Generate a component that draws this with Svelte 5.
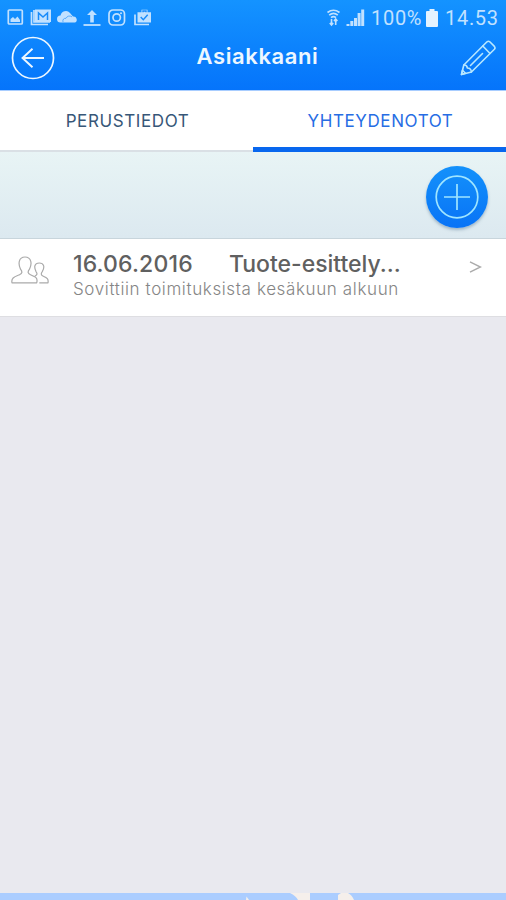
<script>
  const tabs = [
    { label: 'PERUSTIEDOT', active: false },
    { label: 'YHTEYDENOTOT', active: true }
  ];
  const contacts = [
    { date: '16.06.2016', title: 'Tuote-esittely...', note: 'Sovittiin toimituksista kesäkuun alkuun' }
  ];
</script>

<div class="screen">
  <header>
    <div class="status">
      <svg class="notifications" width="152" height="18" viewBox="0 0 152 18" fill="none" stroke="currentColor" stroke-width="1.7">
        <rect x="1.300" y="2" width="14" height="14" rx="1" />
        <path d="M3.500 14V11l2.500-2 2 2 2.500-2.500L13 12v2z" fill="currentColor" stroke="none" />
        <path d="M24.500 4v12.500H41M27 2v12h16" />
        <path d="M28 1.500h16v12.500H28z" fill="currentColor" stroke="none" />
        <path d="M31.500 12V5l4.500 4 4.500-4v7" stroke="#188bfa" stroke-width="1.500" />
        <path d="M53.500 14.500a3.500 3.500 0 0 1 0-7A5.500 5.500 0 0 1 63 5L66 8.500a3.200 3.200 0 0 1 2 6z" fill="currentColor" stroke="none" />
        <path d="M56 14c-.7-2.500 1-4 3-3.700 1-2.300 3.800-3 6-1.500" stroke="#188bfa" stroke-width=".6" />
        <path d="M76.500 17H93.500" stroke-width="1.800" />
        <path d="M85 2l5 5h-3.200v7.500h-3.600V7H80z" fill="currentColor" stroke="none" />
        <rect x="102" y="2" width="15.500" height="15" rx="4" />
        <circle cx="109.700" cy="9.500" r="3.700" />
        <circle cx="114" cy="5.300" r="1" fill="currentColor" stroke="none" />
        <path d="M128 6.500v10h14" />
        <path d="M130.500 4.300h4V1.800h6v2.500H144v10.200h-13.500z" fill="currentColor" stroke="none" />
        <path d="M136 4.300V3h3v1.300M133.700 9l2.600 2.700 4.400-5" stroke="#188bfa" stroke-width="1.400" />
      </svg>
      <div class="system">
        <svg width="40" height="20" viewBox="0 0 40 20" fill="none" stroke="currentColor" stroke-width="1.700">
          <path d="M1.500 4.500q6-4.500 12 0M3.200 7.200q4.300-3.500 8.600 0M5 9.700q2.500-2 5 0" />
          <path d="M5.500 11v6M3.800 15l1.700 2 1.700-2M9.700 17v-6M8 13l1.700-2 1.700 2" stroke-width="1.600" />
          <path d="M20.500 18v-2h3v2zM24.300 18v-5h3v5zM28 18v-8h3v8zM31.600 18V5h3v13zM35.200 18V1.500h3V18z" fill="currentColor" stroke="none" />
        </svg>
        <span class="percent">100%</span>
        <svg class="battery" width="12" height="18" viewBox="0 0 12 18"><path d="M3.500 0h5v2H11q1 0 1 1v14q0 1-1 1H1q-1 0-1-1V3q0-1 1-1h2.500z" fill="currentColor" /></svg>
        <span class="time">14.53</span>
      </div>
    </div>
    <nav>
      <svg width="44" height="44" viewBox="0 0 44 44" fill="none" stroke="#edf7ff" stroke-width="1.700">
        <circle cx="22" cy="22" r="20.500" />
        <path d="M33 22H11.500M21.500 12.800L11.500 22l10 9.200" stroke-width="1.900" />
      </svg>
      <h1>Asiakkaani</h1>
      <svg width="36" height="36" viewBox="0 0 36 36" fill="none" stroke="#b7e7ff" stroke-width="1.600" stroke-linejoin="round" stroke-linecap="round">
        <path d="M1.500 34.500L3.800 25 27 1.800q1.400-1 2.800 0l4.600 4.600q1.200 1.500 0 2.900L11.400 32z" />
        <path d="M3.800 25q3.300-.2 3.500 3 3.800.1 4.100 4M22.800 6l7 7.200M10.500 25.500L22.500 13.500M1.500 34.500l1-4.300 3 3z" />
      </svg>
    </nav>
  </header>

  <div class="tabs">
    {#each tabs as tab}
      <div class="tab" class:active={tab.active}><span>{tab.label}</span></div>
    {/each}
  </div>

  <div class="toolbar">
    <div class="add">
      <svg width="46" height="46" viewBox="0 0 46 46" fill="none" stroke="#9fe5ff" stroke-width="1.700">
        <circle cx="23" cy="23" r="20.800" />
        <path d="M10 23h26M23 10v26" />
      </svg>
    </div>
  </div>

  <main>
    {#each contacts as contact}
      <article>
        <svg class="people" width="38" height="28" viewBox="0 0 38 28" fill="none" stroke="#aaa" stroke-width="1.200" stroke-linejoin="round">
          <path d="M1 26.800C0 22 3 21 8.500 18.700c3-1.200 3-3 1-5.500C7 8 7.500 1 14 1s7.200 7 4.500 12.200c-2 2.500-2 4.300 1 5.500C25 21 27 22 25.700 26.800z" />
          <path d="M28.300 26.800H37c.7-4-1-5-4.700-6.600-2.500-1-2.500-2.700-1-4.600C34 11 33 7 28.300 7c-5 0-5.500 4-3.300 8.600 1.500 2 1.500 3.500-1.200 4.600" />
        </svg>
        <div class="details">
          <div class="headline"><span class="date">{contact.date}</span><span class="title">{contact.title}</span></div>
          <p>{contact.note}</p>
        </div>
        <svg class="chevron" width="13" height="12" viewBox="0 0 13 12" fill="none" stroke="#aaa" stroke-width="1.400"><path d="M1 .8L11.500 6 1 11.200" /></svg>
      </article>
    {/each}
  </main>

  <footer>
    <svg width="506" height="7" viewBox="0 0 506 7" fill="#f5efeb">
      <path d="M246 7l.5-3.500L249 7zM290 0h20v7h-12q-2-4-8-7zM338 7v-5l3-2h7q4 2 6 7z" />
    </svg>
  </footer>
</div>

<style>
  :global(body) { margin: 0; }
  .screen {
    width: 506px;
    height: 900px;
    display: flex;
    flex-direction: column;
    overflow: hidden;
    background: #e9e9ef;
    font-family: Inter, "Liberation Sans", sans-serif;
  }
  svg { display: block; flex: none; }
  header { height: 90px; flex: none; background: linear-gradient(#1493ff, #0574fb); }
  .status {
    height: 36px;
    box-sizing: border-box;
    padding: 8px 8px 0 7px;
    display: flex;
    justify-content: space-between;
    align-items: flex-start;
    color: #c1e1ff;
  }
  .system { display: flex; align-items: flex-start; font: 20px/21px Roboto, sans-serif; }
  .percent { margin-left: 5px; width: 52px; letter-spacing: .7px; white-space: nowrap; }
  .battery { margin-left: 3px; margin-top: 1px; color: #e5f3ff; }
  .time { margin-left: 7px; width: 53px; letter-spacing: .7px; }
  nav { display: flex; justify-content: space-between; padding: 0 10px 0 11px; }
  nav svg:last-child { margin-top: 4px; }
  h1 { margin: 7px 0 0; font-size: 22px; line-height: 26px; font-weight: 600; color: #edf7ff; letter-spacing: .6px; }
  .tabs { display: flex; height: 62px; flex: none; box-sizing: border-box; background: #fff; border-top: 1px solid #a8cdff; }
  .tab {
    width: 50%;
    box-sizing: border-box;
    padding-left: 2px;
    border-bottom: 2px solid #dae0e5;
    text-align: center;
    font-size: 17px;
    line-height: 60px;
    letter-spacing: .6px;
    color: #375778;
  }
  .tab.active { color: #276de4; border-bottom: 5px solid #0867ee; }
  .toolbar {
    height: 87px;
    flex: none;
    box-sizing: border-box;
    padding: 14px 18px 0;
    display: flex;
    justify-content: flex-end;
    background: linear-gradient(#e8f4f5, #dce9f0);
    border-bottom: 1px solid #c8d5dc;
  }
  .add {
    width: 62px;
    height: 62px;
    border-radius: 50%;
    background: linear-gradient(#1491fb, #0873f6);
    display: grid;
    place-items: center;
    box-shadow: 0 2px 3px #63819b80;
  }
  main { flex: 1; }
  article {
    height: 78px;
    box-sizing: border-box;
    background: #fff;
    display: flex;
    align-items: flex-start;
    padding-left: 11px;
    border-bottom: 1px solid #dedee2;
  }
  .people { margin-top: 17px; }
  .details { width: 395px; margin-left: 24px; }
  .headline { display: flex; height: 27px; margin-top: 12px; font-size: 23px; line-height: 27px; font-weight: 500; color: #606060; white-space: nowrap; }
  .date { width: 156px; letter-spacing: .15px; }
  .title { letter-spacing: -.02px; }
  p { margin: 0; font-size: 17px; line-height: 22px; font-weight: 300; color: #858585; letter-spacing: .62px; white-space: nowrap; }
  .chevron { margin-top: 22px; margin-left: 1px; }
  footer { height: 7px; flex: none; background: #abcdff; }
</style>
